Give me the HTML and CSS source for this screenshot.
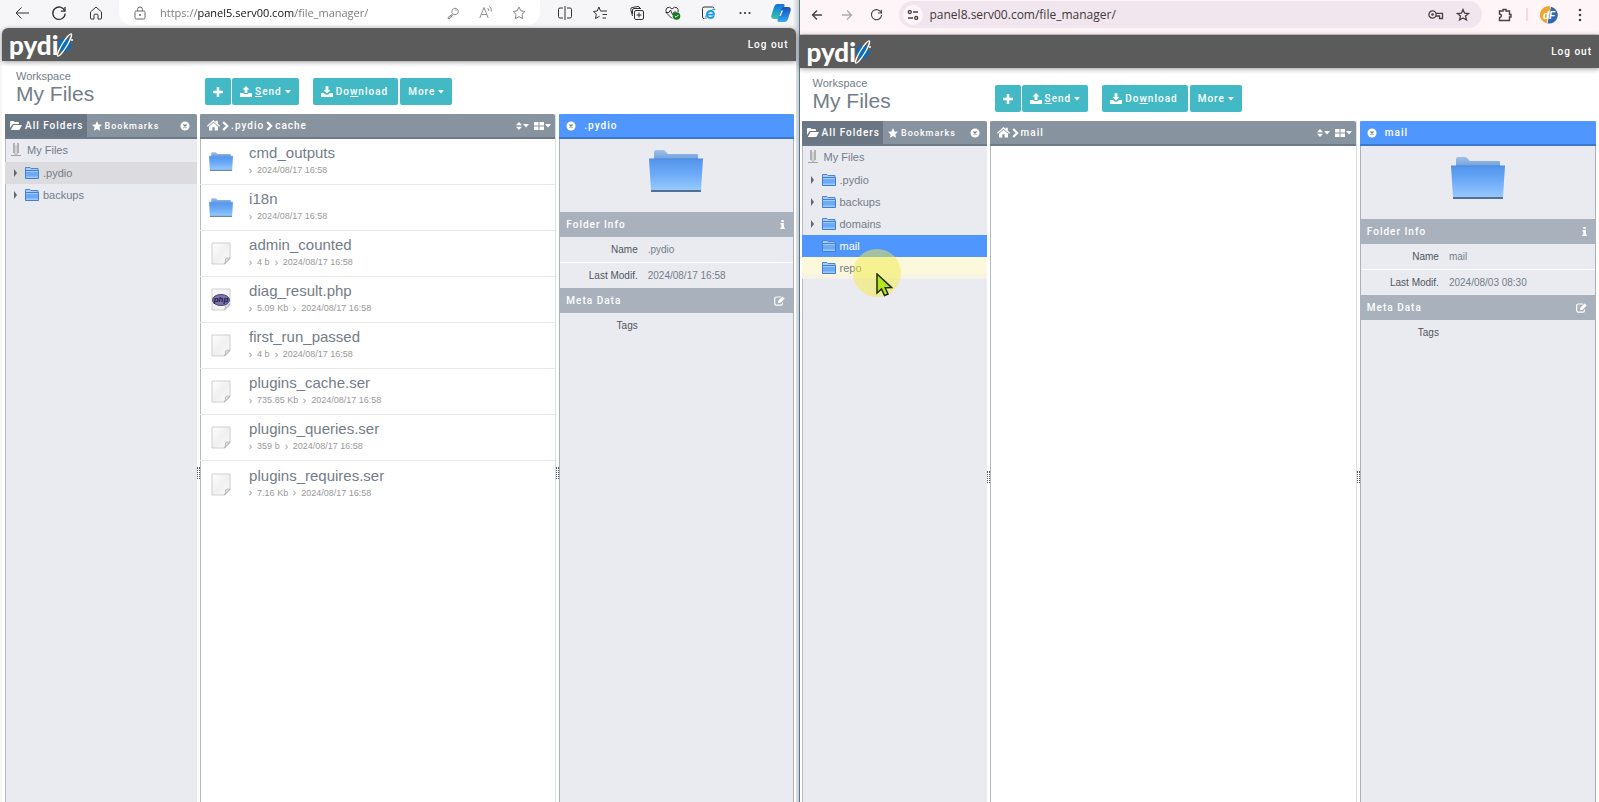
FILE: index.html
```
<!DOCTYPE html>
<html lang="en">
<head>
    <meta charset="UTF-8">
    <title>Pydio - File Manager</title>
    <link rel="stylesheet" href="styles.css">
</head>
<body>

<!-- Shared icons -->
<svg class="sprite" width="0" height="0" aria-hidden="true">
    <defs>
        <linearGradient id="folderFront" x1="0" y1="0" x2="0" y2="1">
            <stop offset="0" stop-color="#5295ec"/>
            <stop offset="0.4" stop-color="#69a7f6"/>
            <stop offset="1" stop-color="#9accff"/>
        </linearGradient>
        <linearGradient id="folderBack" x1="0" y1="0" x2="0" y2="1">
            <stop offset="0" stop-color="#9fc1e8"/>
            <stop offset="1" stop-color="#6d9fdc"/>
        </linearGradient>
        <linearGradient id="paper" x1="0" y1="0" x2="1" y2="1">
            <stop offset="0" stop-color="#ffffff"/>
            <stop offset="0.5" stop-color="#f0f0f0"/>
            <stop offset="1" stop-color="#fbfbfb"/>
        </linearGradient>
        <linearGradient id="copilotA" x1="0" y1="0" x2="0" y2="1">
            <stop offset="0" stop-color="#1b6fd8"/>
            <stop offset="0.5" stop-color="#1a9fce"/>
            <stop offset="1" stop-color="#41c79c"/>
        </linearGradient>
        <linearGradient id="copilotB" x1="0" y1="0" x2="0" y2="1">
            <stop offset="0" stop-color="#1c4fb4"/>
            <stop offset="0.6" stop-color="#2484e0"/>
            <stop offset="1" stop-color="#35aef0"/>
        </linearGradient>
    </defs>
    <symbol id="i-folder" viewBox="0 0 54 42">
        <path d="M5 10V2Q5 0 7 0H14Q16 0 17 2L19 4H48Q49 4 49 5V10Z" fill="url(#folderBack)"/>
        <path d="M0 9H54L52 40Q52 42 50 42H4Q2 42 2 40Z" fill="url(#folderFront)"/>
        <path d="M0 9H54" stroke="#4a89dc" stroke-width="1"/>
        <path d="M2 41H52" stroke="#56708f" stroke-width="2"/>
    </symbol>
    <symbol id="i-folder-small" viewBox="0 0 14 12">
        <path d="M.5 4V.5H5L6 1.500H13V4Z" fill="#a9cbf5" stroke="#4a86d6"/>
        <path d="M.5 3.500H13.500V11.500H.5Z" fill="#6faaf4" stroke="#3f7fd4"/>
        <path d="M1 4.500H13" stroke="#a5cbfa"/>
        <path d="M1 9.500H13V11H1Z" fill="#9cc8fb"/>
    </symbol>
    <symbol id="i-file" viewBox="0 0 20 23">
        <path d="M1 1H19V17L14 22H1Z" fill="url(#paper)" stroke="#cfcfcf"/>
        <path d="M19 16Q15 16 14.500 17Q15 20 13 22Z" fill="#e2e2e2" stroke="#bdbdbd"/>
    </symbol>
    <symbol id="i-root" viewBox="0 0 10 14">
        <path d="M3 0V10M7 0V10" stroke="#a3a3a3" stroke-width="1.600"/>
        <path d="M5 2V12M3 10L5 12L7 10" stroke="#bdbdbd" fill="none"/>
        <path d="M0 12.500H10" stroke="#a3a3a3"/>
    </symbol>
    <symbol id="i-folder-open" viewBox="0 0 12 9">
        <path d="M0 7V1Q0 0 1 0H3.500L4.500 1H8Q9 1 9 2V3H3.500Q2.500 3 2 4Z" fill="currentColor"/>
        <path d="M3.500 4H12L10 8Q9.500 9 8.500 9H.8Z" fill="currentColor"/>
    </symbol>
    <symbol id="i-star" viewBox="0 0 10 10">
        <path d="M5 0L6.500 3.400L10 3.800L7.400 6.200L8.100 9.800L5 8L1.900 9.800L2.600 6.200L0 3.800L3.500 3.400Z" fill="currentColor"/>
    </symbol>
    <symbol id="i-close" viewBox="0 0 10 10">
        <circle cx="5" cy="5" r="4.500" fill="currentColor"/>
        <path d="M3.500 3.500L6.500 6.500M6.500 3.500L3.500 6.500" stroke="#6f7c8b" stroke-width="1.300"/>
    </symbol>
    <symbol id="i-home" viewBox="0 0 13 11">
        <path d="M6.500 0L8.800 2V.8H10.800V3.800L13 5.800L12.200 6.700L6.500 1.700L.8 6.700L0 5.800Z" fill="currentColor"/>
        <path d="M6.500 2.700L11 6.700V10.500H7.700V7.200H5.300V10.500H2V6.700Z" fill="currentColor"/>
    </symbol>
    <symbol id="i-chevron" viewBox="0 0 7 10">
        <path d="M1.200 1L5.200 5L1.200 9" stroke="currentColor" stroke-width="2.200" fill="none"/>
    </symbol>
    <symbol id="i-sep" viewBox="0 0 3 6">
        <path d="M.4 .7L2.500 3L.4 5.300" stroke="currentColor" fill="none"/>
    </symbol>
    <symbol id="i-caret" viewBox="0 0 6 4">
        <path d="M0 0H6L3 3.500Z" fill="currentColor"/>
    </symbol>
    <symbol id="i-sort" viewBox="0 0 6 8">
        <path d="M0 3.300L3 0L6 3.300ZM0 4.700L3 8L6 4.700Z" fill="currentColor"/>
    </symbol>
    <symbol id="i-grid" viewBox="0 0 10 8">
        <path d="M0 0H4.500V3.600H0ZM5.500 0H10V3.600H5.500ZM0 4.400H4.500V8H0ZM5.500 4.400H10V8H5.500Z" fill="currentColor"/>
    </symbol>
    <symbol id="i-plus" viewBox="0 0 10 10">
        <path d="M3.700 0H6.300V3.700H10V6.300H6.300V10H3.700V6.300H0V3.700H3.700Z" fill="currentColor"/>
    </symbol>
    <symbol id="i-upload" viewBox="0 0 12 11">
        <path d="M6 0L9.500 3.600H7.400V7H4.600V3.600H2.500Z" fill="currentColor"/>
        <path d="M0 7H3.700V8H8.300V7H12V11H0Z" fill="currentColor"/>
    </symbol>
    <symbol id="i-download" viewBox="0 0 12 11">
        <path d="M6 7.500L2.500 3.900H4.600V.3H7.400V3.900H9.500Z" fill="currentColor"/>
        <path d="M0 7H3L5 8.800H7L9 7H12V11H0Z" fill="currentColor"/>
    </symbol>
    <symbol id="i-info" viewBox="0 0 5 9">
        <path d="M1.300 0H3.800V2H1.300ZM.5 3H3.900V7.600H4.800V9H.3V7.600H1.300V4.400H.5Z" fill="currentColor"/>
    </symbol>
    <symbol id="i-edit" viewBox="0 0 11 10">
        <path d="M7 1H2.500Q.7 1 .7 2.600V7.600Q.7 9.200 2.500 9.200H6.800Q8.500 9.200 8.500 7.600V6.500" stroke="currentColor" stroke-width="1.200" fill="none"/>
        <path d="M4 7V5L8.600 .4L10.700 2.400L6.200 7Z" fill="currentColor"/>
    </symbol>
    <!-- globe and ring standing for the last letter of the wordmark -->
    <symbol id="i-orbit" viewBox="0 0 18 26">
        <circle cx="8.500" cy="13" r="6.800" fill="#0f6db8"/>
        <ellipse cx="8.500" cy="13" rx="2.400" ry="13" transform="rotate(31 8.500 13)" stroke="#ffffff" stroke-width="1.300" fill="none"/>
        <circle cx="16" cy="8" r="1" fill="#ffffff"/>
    </symbol>
    <symbol id="i-reload" viewBox="0 0 16 16">
        <path d="M13.800 6A6.200 6.200 0 1 0 14.200 8.500" stroke="currentColor" stroke-width="1.300" fill="none"/>
        <path d="M14 2V6.200H9.800" stroke="currentColor" stroke-width="1.300" fill="none"/>
    </symbol>
</svg>

<main class="desktop">

    <!-- Left browser -->
    <section class="window edge">
        <div class="browser-bar">
            <div class="nav">
                <button class="ico" aria-label="Back"><svg width="14" height="14" viewBox="0 0 14 14"><path d="M14 7H1M6.500 1.500L1 7L6.500 12.500" stroke="currentColor" fill="none"/></svg></button>
                <button class="ico" aria-label="Refresh"><svg width="16" height="16"><use href="#i-reload"/></svg></button>
                <button class="ico" aria-label="Home"><svg width="14" height="14" viewBox="0 0 14 14"><path d="M1.500 6L7 1L12.500 6V12.500Q12.500 13 12 13H9V9Q9 8 7 8Q5 8 5 9V13H2Q1.500 13 1.500 12.500Z" stroke="currentColor" fill="none"/></svg></button>
            </div>
            <div class="omnibox">
                <button class="ico lock" aria-label="View site information"><svg width="12" height="14" viewBox="0 0 12 14"><rect x="1" y="5" width="10" height="8" rx="1.500" stroke="currentColor" fill="none"/><path d="M3.500 5V3.500A2.500 2.500 0 0 1 8.500 3.500V5" stroke="currentColor" fill="none"/><circle cx="6" cy="9" r="1" fill="currentColor"/></svg></button>
                <input class="url" type="text" aria-label="Address" value="https://panel5.serv00.com/file_manager/">
                <button class="ico faint" aria-label="Passwords"><svg width="12" height="12" viewBox="0 0 12 12"><path d="M6 6.500L1 10.500V11.500H3V10H4.500V8.500H5.500L6.500 7.300A3.200 3.200 0 1 0 5 5.500Z" stroke="currentColor" fill="none"/><circle cx="9" cy="3" r=".7" fill="currentColor"/></svg></button>
                <button class="ico faint" aria-label="Read aloud"><svg width="14" height="13" viewBox="0 0 14 13"><path d="M.8 12L5 1.500L9.200 12M2.500 8.500H7.500M8.500 2Q10 3 9.800 5M10.500 .5Q13 2.500 12.300 5.500" stroke="currentColor" fill="none"/></svg></button>
                <button class="ico faint" aria-label="Add to favorites"><svg width="14" height="14" viewBox="0 0 14 14"><path d="M7 1L8.900 4.900L13 5.400L10 8.300L10.700 12.700L7 10.600L3.300 12.700L4 8.300L1 5.400L5.100 4.900Z" stroke="currentColor" fill="none"/></svg></button>
            </div>
            <div class="tools">
                <button class="ico" aria-label="Split screen"><svg width="14" height="14" viewBox="0 0 14 14"><path d="M7 0V14M5 2H2Q.5 2 .5 3.500V10.500Q.5 12 2 12H5M9 2H12Q13.500 2 13.500 3.500V10.500Q13.500 12 12 12H9" stroke="currentColor" fill="none"/></svg></button>
                <button class="ico" aria-label="Favorites"><svg width="15" height="14" viewBox="0 0 15 14"><path d="M10 5H7.500L5.900 1L4.300 5L.5 5.500L3.300 8.200L2.500 12.500L6.500 10.300M10 5H14M9.500 8.500H14M9.500 12H13" stroke="currentColor" fill="none"/></svg></button>
                <button class="ico" aria-label="Collections"><svg width="14" height="14" viewBox="0 0 14 14"><rect x="4.500" y="4.500" width="9" height="9" rx="1.500" stroke="currentColor" fill="none"/><path d="M9 6.500V11.500M6.500 9H11.500M2.500 10L.8 3.500Q.5 2 2 1.500L8 .5Q9.500 .5 10 2.500M2.500 8V4Q2.500 2.500 4 2.500H11" stroke="currentColor" fill="none"/></svg></button>
                <button class="ico" aria-label="Browser essentials"><svg width="16" height="14" viewBox="0 0 16 14"><path d="M7 12.500L2 7.500Q-.5 4 2 1.800Q4.500 0 7 3Q9.500 0 12 1.800Q14 3.500 13 6M.5 6.500H4L5.500 4L7.500 8.500L9 6H11" stroke="currentColor" fill="none"/><circle cx="11.500" cy="10" r="3.800" fill="#157a1d"/><path d="M9.700 10L11 11.300L13.500 8.800" stroke="#ffffff" fill="none"/></svg></button>
                <button class="ico" aria-label="Internet Explorer mode"><svg width="15" height="14" viewBox="0 0 15 14"><path d="M3.500 12.500H3Q1.500 12.500 1.500 11V2.500Q1.500 1 3 1H11.500Q13 1 13 2.500" stroke="currentColor" fill="none"/><path d="M12.800 10Q11.800 12 9.500 12Q6 12 6 8.500Q6 5 9.500 5Q13 5 13 8.600H6.500" stroke="#1c9ce8" stroke-width="1.900" fill="none"/><path d="M5 13Q3.500 10 8 6Q12 2.500 14.300 3.500" stroke="#1c9ce8" fill="none"/></svg></button>
                <button class="ico" aria-label="Settings and more"><svg width="12" height="4" viewBox="0 0 12 4"><circle cx="1.500" cy="2" r="1.100" fill="currentColor"/><circle cx="6" cy="2" r="1.100" fill="currentColor"/><circle cx="10.500" cy="2" r="1.100" fill="currentColor"/></svg></button>
                <button class="ico" aria-label="Copilot"><svg width="20" height="20" viewBox="0 0 20 20"><path d="M6 1H12Q14 1 13.500 3L10 13.500Q9 16 6.500 16H3Q-.5 16 .5 12L3 4Q4 1 6 1Z" fill="url(#copilotA)"/><path d="M14 19H8Q6 19 6.500 17L10 6.500Q11 4 13.500 4H17Q20.500 4 19.500 8L17 16Q16 19 14 19Z" fill="url(#copilotB)"/><path d="M10.500 7.500H12L9.500 13H8.500Z" fill="#ffffff"/></svg></button>
            </div>
        </div>

        <div class="app">
            <header class="app-header">
                <a class="logo" href="#" aria-label="Pydio">pydi<svg width="18" height="26"><use href="#i-orbit"/></svg></a>
                <a class="logout" href="#">Log out</a>
            </header>

            <div class="top-row">
                <div class="workspace">
                    <span class="workspace-label">Workspace</span>
                    <h1>My Files</h1>
                </div>
                <div class="toolbar">
                    <button class="btn square" aria-label="New"><svg width="10" height="10"><use href="#i-plus"/></svg></button>
                    <button class="btn"><svg width="12" height="11"><use href="#i-upload"/></svg><span><u>S</u>end</span><svg width="6" height="4"><use href="#i-caret"/></svg></button>
                    <button class="btn download"><svg width="12" height="11"><use href="#i-download"/></svg><span>Do<u>w</u>nload</span></button>
                    <button class="btn more"><span>More</span><svg width="6" height="4"><use href="#i-caret"/></svg></button>
                </div>
            </div>

            <div class="panels">
                <nav class="panel side">
                    <div class="panel-head tabs">
                        <button class="tab active"><svg width="12" height="9"><use href="#i-folder-open"/></svg>All Folders</button>
                        <button class="tab small"><svg width="10" height="10"><use href="#i-star"/></svg>Bookmarks</button>
                        <button class="close" aria-label="Close panel"><svg width="10" height="10"><use href="#i-close"/></svg></button>
                    </div>
                    <ul class="tree">
                        <li class="root"><a href="#"><svg width="10" height="14"><use href="#i-root"/></svg>My Files</a></li>
                        <li class="open parent"><a href="#"><svg width="14" height="12"><use href="#i-folder-small"/></svg>.pydio</a></li>
                        <li class="parent"><a href="#"><svg width="14" height="12"><use href="#i-folder-small"/></svg>backups</a></li>
                    </ul>
                </nav>
                <div class="resizer"><span></span></div>
                <section class="panel files">
                    <div class="panel-head crumbs">
                        <a href="#" aria-label="Home"><svg width="13" height="11"><use href="#i-home"/></svg></a>
                        <svg width="7" height="10"><use href="#i-chevron"/></svg>
                        <a href="#">.pydio</a>
                        <svg width="7" height="10"><use href="#i-chevron"/></svg>
                        <a href="#">cache</a>
                        <button class="view-btn first" aria-label="Sort by"><svg width="6" height="8"><use href="#i-sort"/></svg><svg width="6" height="4"><use href="#i-caret"/></svg></button>
                        <button class="view-btn" aria-label="Display"><svg width="10" height="8"><use href="#i-grid"/></svg><svg width="6" height="4"><use href="#i-caret"/></svg></button>
                    </div>
                    <ul class="file-list">
                        <li>
                            <svg class="thumb" width="24" height="19"><use href="#i-folder"/></svg>
                            <div><a href="#">cmd_outputs</a><p><svg width="3" height="6"><use href="#i-sep"/></svg>2024/08/17 16:58</p></div>
                        </li>
                        <li>
                            <svg class="thumb" width="24" height="19"><use href="#i-folder"/></svg>
                            <div><a href="#">i18n</a><p><svg width="3" height="6"><use href="#i-sep"/></svg>2024/08/17 16:58</p></div>
                        </li>
                        <li>
                            <svg class="thumb" width="24" height="23"><use href="#i-file"/></svg>
                            <div><a href="#">admin_counted</a><p><svg width="3" height="6"><use href="#i-sep"/></svg>4 b<svg width="3" height="6"><use href="#i-sep"/></svg>2024/08/17 16:58</p></div>
                        </li>
                        <li>
                            <svg class="thumb" width="24" height="23" viewBox="0 0 24 23"><use href="#i-file" x="2" width="20" height="23"/><ellipse cx="12" cy="12" rx="8.500" ry="5.500" fill="#7d75b0" stroke="#4b447c"/><text x="12" y="14" text-anchor="middle" class="php-text">php</text></svg>
                            <div><a href="#">diag_result.php</a><p><svg width="3" height="6"><use href="#i-sep"/></svg>5.09 Kb<svg width="3" height="6"><use href="#i-sep"/></svg>2024/08/17 16:58</p></div>
                        </li>
                        <li>
                            <svg class="thumb" width="24" height="23"><use href="#i-file"/></svg>
                            <div><a href="#">first_run_passed</a><p><svg width="3" height="6"><use href="#i-sep"/></svg>4 b<svg width="3" height="6"><use href="#i-sep"/></svg>2024/08/17 16:58</p></div>
                        </li>
                        <li>
                            <svg class="thumb" width="24" height="23"><use href="#i-file"/></svg>
                            <div><a href="#">plugins_cache.ser</a><p><svg width="3" height="6"><use href="#i-sep"/></svg>735.85 Kb<svg width="3" height="6"><use href="#i-sep"/></svg>2024/08/17 16:58</p></div>
                        </li>
                        <li>
                            <svg class="thumb" width="24" height="23"><use href="#i-file"/></svg>
                            <div><a href="#">plugins_queries.ser</a><p><svg width="3" height="6"><use href="#i-sep"/></svg>359 b<svg width="3" height="6"><use href="#i-sep"/></svg>2024/08/17 16:58</p></div>
                        </li>
                        <li>
                            <svg class="thumb" width="24" height="23"><use href="#i-file"/></svg>
                            <div><a href="#">plugins_requires.ser</a><p><svg width="3" height="6"><use href="#i-sep"/></svg>7.16 Kb<svg width="3" height="6"><use href="#i-sep"/></svg>2024/08/17 16:58</p></div>
                        </li>
                    </ul>
                </section>
                <div class="resizer"><span></span></div>
                <aside class="panel info">
                    <div class="panel-head blue">
                        <button class="close" aria-label="Close panel"><svg width="10" height="10"><use href="#i-close"/></svg></button>
                        .pydio
                    </div>
                    <div class="preview"><svg width="54" height="42"><use href="#i-folder"/></svg></div>
                    <h2>Folder Info<svg width="5" height="9"><use href="#i-info"/></svg></h2>
                    <dl>
                        <dt>Name</dt><dd>.pydio</dd>
                        <dt>Last Modif.</dt><dd>2024/08/17 16:58</dd>
                    </dl>
                    <h2>Meta Data<svg width="11" height="10"><use href="#i-edit"/></svg></h2>
                    <dl>
                        <dt>Tags</dt><dd></dd>
                    </dl>
                </aside>
            </div>
        </div>
    </section>

    <!-- Right browser -->
    <section class="window chrome">
        <div class="browser-bar">
            <div class="nav">
                <button class="ico" aria-label="Back"><svg width="12" height="12" viewBox="0 0 12 12"><path d="M11 6H2M6 1.500L1.500 6L6 10.500" stroke="currentColor" stroke-width="1.400" fill="none"/></svg></button>
                <button class="ico disabled" aria-label="Forward" disabled><svg width="12" height="12" viewBox="0 0 12 12"><path d="M1 6H10M6 1.500L10.500 6L6 10.500" stroke="currentColor" stroke-width="1.400" fill="none"/></svg></button>
                <button class="ico" aria-label="Reload"><svg width="13" height="13"><use href="#i-reload"/></svg></button>
            </div>
            <div class="omnibox">
                <button class="ico site" aria-label="View site information"><svg width="12" height="10" viewBox="0 0 12 10"><path d="M6 2H11M1 8H6" stroke="currentColor" stroke-width="1.400"/><circle cx="2.800" cy="2" r="1.500" stroke="currentColor" stroke-width="1.300" fill="none"/><circle cx="9.200" cy="8" r="1.500" stroke="currentColor" stroke-width="1.300" fill="none"/></svg></button>
                <input class="url" type="text" aria-label="Address" value="panel8.serv00.com/file_manager/">
                <button class="ico" aria-label="Manage passwords"><svg width="16" height="10" viewBox="0 0 16 10"><circle cx="4.500" cy="4.500" r="3.600" stroke="currentColor" stroke-width="1.300" fill="none"/><circle cx="4.500" cy="4.500" r="1.300" fill="currentColor"/><path d="M8 3.300H14.500V8.500H11.500V6H8" stroke="currentColor" stroke-width="1.300" fill="none"/></svg></button>
                <button class="ico" aria-label="Bookmark this tab"><svg width="14" height="14" viewBox="0 0 14 14"><path d="M7 1.500L8.600 5.200L12.600 5.500L9.500 8.100L10.500 12L7 9.900L3.500 12L4.500 8.100L1.400 5.500L5.400 5.200Z" stroke="currentColor" stroke-width="1.300" fill="none"/></svg></button>
            </div>
            <div class="tools">
                <button class="ico" aria-label="Extensions"><svg width="14" height="14" viewBox="0 0 14 14"><path d="M1.500 3H5V1.500H8V3H11.500V6.500H13V9H11.500V12.500H1.500V9.500Q3.500 9 3.500 7.700Q3.500 6.400 1.500 6Z" stroke="currentColor" stroke-width="1.400" fill="none"/></svg></button>
                <span class="divider"></span>
                <button class="ico" aria-label="Profile"><svg width="18" height="18" viewBox="0 0 18 18"><path d="M10.500 .5A8.500 8.500 0 0 0 6.500 17.200Z" fill="#eea62c"/><path d="M11 .7A8.500 8.500 0 0 1 7.500 17.400Z" fill="#3269b5"/><text x="9" y="13" text-anchor="middle" class="avatar-text">dF</text></svg></button>
                <button class="ico" aria-label="Customize and control"><svg width="4" height="14" viewBox="0 0 4 14"><circle cx="2" cy="2" r="1.300" fill="currentColor"/><circle cx="2" cy="7" r="1.300" fill="currentColor"/><circle cx="2" cy="12" r="1.300" fill="currentColor"/></svg></button>
            </div>
        </div>

        <div class="app">
            <header class="app-header">
                <a class="logo" href="#" aria-label="Pydio">pydi<svg width="18" height="26"><use href="#i-orbit"/></svg></a>
                <a class="logout" href="#">Log out</a>
            </header>

            <div class="top-row">
                <div class="workspace">
                    <span class="workspace-label">Workspace</span>
                    <h1>My Files</h1>
                </div>
                <div class="toolbar">
                    <button class="btn square" aria-label="New"><svg width="10" height="10"><use href="#i-plus"/></svg></button>
                    <button class="btn"><svg width="12" height="11"><use href="#i-upload"/></svg><span><u>S</u>end</span><svg width="6" height="4"><use href="#i-caret"/></svg></button>
                    <button class="btn download"><svg width="12" height="11"><use href="#i-download"/></svg><span>Do<u>w</u>nload</span></button>
                    <button class="btn more"><span>More</span><svg width="6" height="4"><use href="#i-caret"/></svg></button>
                </div>
            </div>

            <div class="panels">
                <nav class="panel side">
                    <div class="panel-head tabs">
                        <button class="tab active"><svg width="12" height="9"><use href="#i-folder-open"/></svg>All Folders</button>
                        <button class="tab small"><svg width="10" height="10"><use href="#i-star"/></svg>Bookmarks</button>
                        <button class="close" aria-label="Close panel"><svg width="10" height="10"><use href="#i-close"/></svg></button>
                    </div>
                    <ul class="tree">
                        <li class="root"><a href="#"><svg width="10" height="14"><use href="#i-root"/></svg>My Files</a></li>
                        <li class="parent"><a href="#"><svg width="14" height="12"><use href="#i-folder-small"/></svg>.pydio</a></li>
                        <li class="parent"><a href="#"><svg width="14" height="12"><use href="#i-folder-small"/></svg>backups</a></li>
                        <li class="parent"><a href="#"><svg width="14" height="12"><use href="#i-folder-small"/></svg>domains</a></li>
                        <li class="selected"><a href="#"><svg width="14" height="12"><use href="#i-folder-small"/></svg>mail</a></li>
                        <li class="hover"><a href="#"><svg width="14" height="12"><use href="#i-folder-small"/></svg>repo</a>
                            <span class="pointer"><svg width="17" height="24" viewBox="0 0 17 24"><path d="M1 1V20L5.500 16L8.500 22.500L12 21L9.200 14.800L15.500 14.500Z" fill="#b5e61d" stroke="#1d2b0a" stroke-width="1.500"/></svg></span>
                        </li>
                    </ul>
                </nav>
                <div class="resizer"><span></span></div>
                <section class="panel files">
                    <div class="panel-head crumbs">
                        <a href="#" aria-label="Home"><svg width="13" height="11"><use href="#i-home"/></svg></a>
                        <svg width="7" height="10"><use href="#i-chevron"/></svg>
                        <a href="#">mail</a>
                        <button class="view-btn first" aria-label="Sort by"><svg width="6" height="8"><use href="#i-sort"/></svg><svg width="6" height="4"><use href="#i-caret"/></svg></button>
                        <button class="view-btn" aria-label="Display"><svg width="10" height="8"><use href="#i-grid"/></svg><svg width="6" height="4"><use href="#i-caret"/></svg></button>
                    </div>
                </section>
                <div class="resizer"><span></span></div>
                <aside class="panel info">
                    <div class="panel-head blue">
                        <button class="close" aria-label="Close panel"><svg width="10" height="10"><use href="#i-close"/></svg></button>
                        mail
                    </div>
                    <div class="preview"><svg width="54" height="42"><use href="#i-folder"/></svg></div>
                    <h2>Folder Info<svg width="5" height="9"><use href="#i-info"/></svg></h2>
                    <dl>
                        <dt>Name</dt><dd>mail</dd>
                        <dt>Last Modif.</dt><dd>2024/08/03 08:30</dd>
                    </dl>
                    <h2>Meta Data<svg width="11" height="10"><use href="#i-edit"/></svg></h2>
                    <dl>
                        <dt>Tags</dt><dd></dd>
                    </dl>
                </aside>
            </div>
        </div>
    </section>

</main>

</body>
</html>
```
FILE: styles.css
```
* {
    box-sizing: border-box;
}

body {
    margin: 0;
    background-color: #ffffff;
    color: #737d88;
    font-family: "Liberation Sans", Arial, sans-serif;
    font-size: 11px;
}

button, input {
    margin: 0;
    padding: 0;
    border: 0;
    background: none;
    color: inherit;
    font: inherit;
    letter-spacing: inherit;
}

a {
    color: inherit;
    text-decoration: none;
}

h1, h2, p, ul, dl, dd {
    margin: 0;
    padding: 0;
    font-weight: normal;
}

ul {
    list-style: none;
}

svg {
    display: block;
    flex: none;
}

.sprite {
    position: absolute;
}

.desktop {
    display: grid;
    grid-template-columns: 1fr 1fr;
    height: 100vh;
    overflow: hidden;
}

.window {
    display: flex;
    flex-direction: column;
    min-width: 0;
    min-height: 0;
}

/* Browser bars */
.browser-bar {
    display: flex;
    flex: none;
}

.nav, .tools, .omnibox {
    display: flex;
    align-items: center;
}

.ico {
    display: flex;
    flex: none;
    align-items: center;
    justify-content: center;
    width: 20px;
    height: 20px;
}

.omnibox {
    flex: 1;
    min-width: 0;
}

.url {
    flex: 1;
    min-width: 0;
    outline: none;
    font-family: "Open Sans", "Noto Sans", sans-serif;
}

.edge {
    border-right: 1px solid #5c7683;
    background: linear-gradient(to right, #f6f5f8 calc(100% - 6px), #c4ccd2);
    color: #333333;
}

.edge .browser-bar {
    height: 28px;
    padding: 0 8px 3px 12px;
}

.edge .nav {
    gap: 17px;
}

.edge .tools {
    gap: 16px;
}

.edge .omnibox {
    gap: 13px;
    margin: 0 15px 0 13px;
    padding: 0 11px;
    border-radius: 0 0 13px 13px;
    background-color: #ffffff;
}

.edge .lock {
    color: #666666;
    margin-right: -3px;
}

.edge .faint {
    color: #8a8a8a;
}

/* host name is darker than the scheme and the path */
.edge .url {
    background-image: linear-gradient(to right, #767676 38px, #111111 38px, #111111 135px, #767676 135px);
    -webkit-background-clip: text;
    background-clip: text;
    color: transparent;
    font-size: 11px;
}

.chrome .browser-bar {
    height: 35px;
    padding: 1px 9px 6px 7px;
    border-bottom: 1px solid #d9ccd2;
    background-color: #fdf5f8;
    color: #4a3f44;
}

.chrome .nav {
    gap: 10px;
}

.chrome .disabled {
    color: #b3a9ae;
}

.chrome .omnibox {
    gap: 7px;
    margin: 0 13px 0 12px;
    padding: 0 9px 0 4px;
    border-radius: 14px;
    background-color: #f2e6ee;
}

.chrome .site {
    border-radius: 50%;
    background-color: #fdf5f8;
}

.chrome .url {
    color: #3f383c;
    font-size: 12px;
}

.chrome .tools {
    gap: 11px;
}

.divider {
    width: 2px;
    height: 13px;
    background-color: #f8d7e2;
}

.avatar-text {
    fill: #ffffff;
    font-family: "Liberation Sans", sans-serif;
    font-size: 10px;
    font-style: italic;
    font-weight: bold;
}

/* Application */
.app {
    display: flex;
    flex: 1;
    flex-direction: column;
    min-height: 0;
    background-color: #ffffff;
    color: #737d88;
}

.edge .app {
    margin: 0 3px 0 2px;
    border-radius: 6px 6px 0 0;
}

.app-header {
    display: flex;
    flex: none;
    align-items: center;
    justify-content: space-between;
    height: 33px;
    padding: 0 7px;
    background-color: #5b5b5b;
    box-shadow: 0 1px 5px rgba(0, 0, 0, 0.4);
    color: #ffffff;
}

.edge .app-header {
    border-radius: 6px 6px 0 0;
}

.logo {
    display: flex;
    align-items: center;
    height: 28px;
    font-family: "Lato", sans-serif;
    font-size: 26px;
    font-weight: 900;
    line-height: 24px;
}

.logo svg {
    margin-left: -2px;
}

.logout, .panel-head, .btn, .info h2 {
    font-family: "Roboto", sans-serif;
    font-size: 10px;
    font-weight: 500;
    letter-spacing: 1px;
}

.top-row, .panels {
    display: grid;
    grid-template-columns: 192fr 3px 356fr 3px 234fr;
    padding: 0 2px 0 3px;
}

.chrome .top-row, .chrome .panels {
    grid-template-columns: 185fr 3px 367fr 3px 236fr;
    padding: 0 3px 0 2px;
}

.top-row {
    flex: none;
    height: 53px;
}

.workspace {
    padding: 8px 0 0 11px;
}

.workspace-label {
    display: block;
    line-height: 14px;
}

.workspace h1 {
    font-size: 21px;
    line-height: 22px;
}

.toolbar {
    display: flex;
    grid-column: 3 / 6;
    align-items: flex-start;
    gap: 1px;
    padding: 17px 0 0 5px;
}

.btn {
    display: flex;
    align-items: center;
    gap: 3px;
    height: 27px;
    padding: 0 8px;
    border-radius: 2px;
    background-color: #43b9c5;
    color: #ffffff;
}

.btn:hover {
    background-color: #37a6b2;
}

.btn.download {
    margin: 0 1px 0 13px;
    padding-right: 10px;
}

/* Panels */
.panels {
    flex: 1;
    min-height: 0;
}

.panel {
    display: flex;
    flex-direction: column;
    min-width: 0;
}

.panel-head {
    display: flex;
    flex: none;
    align-items: center;
    height: 25px;
    border-bottom: 2px solid #6e7a88;
    border-radius: 2px 2px 0 0;
    background-color: #8893a0;
    color: #ffffff;
}

.panel-head.blue {
    gap: 8px;
    padding-left: 7px;
    border-bottom-color: #3d78d0;
    background-color: #4f97ff;
}

.tabs {
    align-items: stretch;
}

.tab {
    display: flex;
    align-items: center;
    gap: 3px;
    padding: 0 5px;
    white-space: nowrap;
}

.tab.active {
    padding-right: 3px;
    background-color: #6b7684;
}

.tab.small {
    font-size: 9px;
}

.tabs .close {
    margin: 0 7px 0 auto;
}

.side, .info {
    background-color: #eaebf1;
}

.side, .files {
    box-shadow: inset 1px 0 #b4bac4;
}

.info {
    box-shadow: inset 1px 0 #a9b1bd, inset -1px 0 #a9b1bd;
}

.files {
    border-right: 1px solid #dcdfe4;
}

.crumbs {
    gap: 2px;
    padding: 0 4px 0 7px;
}

.view-btn {
    display: flex;
    align-items: center;
    gap: 1px;
    margin-left: 3px;
}

.view-btn.first {
    margin-left: auto;
}

.tree li {
    position: relative;
    height: 22px;
    line-height: 22px;
}

.tree a {
    display: flex;
    align-items: center;
    gap: 4px;
    padding-left: 20px;
}

.tree .root {
    height: 23px;
}

.tree .root a {
    gap: 6px;
    padding-left: 6px;
}

.tree .parent a::before {
    content: "";
    margin: 0 4px 0 -11px;
    border: solid transparent;
    border-width: 4px 0 4px 3px;
    border-left-color: #5f6873;
}

.tree .open {
    background-color: #dcdcde;
}

.tree .selected {
    background-color: #4f97ff;
    color: #ffffff;
}

.tree .hover {
    background: linear-gradient(#fbf8dc 70%, #f3f1e6);
}

.pointer {
    position: absolute;
    top: -8px;
    left: 51px;
    width: 48px;
    height: 48px;
    padding: 24px 0 0 23px;
    border-radius: 50%;
    background-color: rgba(244, 236, 70, 0.5);
    pointer-events: none;
}

.resizer {
    display: flex;
    align-items: center;
    justify-content: flex-end;
    padding-top: 30px;
    cursor: col-resize;
}

.resizer span {
    width: 3px;
    height: 12px;
    border: dotted #555555;
    border-width: 0 1px;
}

.file-list li {
    display: flex;
    align-items: center;
    gap: 16px;
    height: 46px;
    padding-left: 9px;
    border-bottom: 1px solid #e8e8e8;
}

.file-list li:last-child {
    border-bottom: 0;
}

.file-list a {
    display: block;
    font-size: 15px;
    line-height: 18px;
}

.file-list p {
    display: flex;
    align-items: center;
    gap: 5px;
    color: #999999;
    font-size: 9px;
    line-height: 17px;
}

.php-text {
    fill: #1b1838;
    font-size: 8px;
    font-style: italic;
    font-weight: bold;
}

.preview {
    display: flex;
    justify-content: center;
    height: 73px;
    padding-top: 11px;
}

.info h2 {
    display: flex;
    align-items: center;
    justify-content: space-between;
    height: 25px;
    padding: 0 9px 0 7px;
    background-color: #a9b1bd;
    color: #ffffff;
}

.info dl {
    display: grid;
    grid-template-columns: 1fr 2fr;
    row-gap: 1px;
    margin: 0 1px;
    background-color: #ffffff;
    font-size: 10px;
    line-height: 25px;
}

.info dt, .info dd {
    background-color: #eaebf1;
}

.info dt {
    color: #50565d;
    text-align: right;
}

.info dd {
    padding-left: 10px;
}
```
